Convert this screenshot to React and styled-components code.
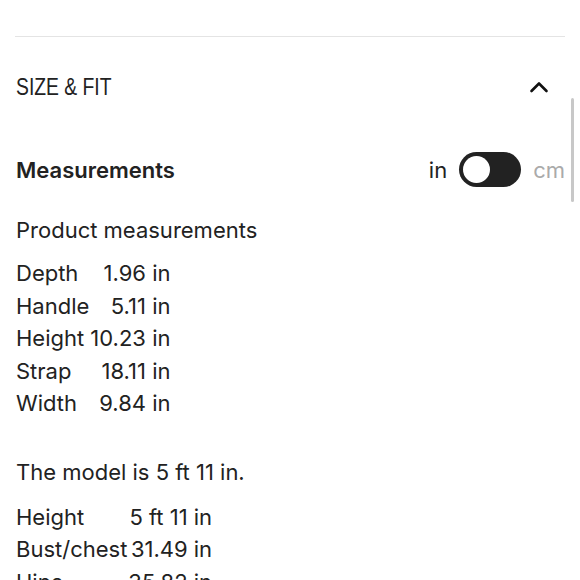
import React from "react";
import styled, { createGlobalStyle } from "styled-components";

const Global = createGlobalStyle`
  html, body { margin: 0; padding: 0; background: #fff; }
  body { font-family: Inter, "Noto Sans", sans-serif; color: #222; }
`;

const Page = styled.div`
  position: relative;
  width: 580px;
  height: 580px;
  overflow: hidden;
  padding: 36px 15px 0 16px;
  box-sizing: border-box;
`;

const Divider = styled.div`
  height: 1px;
  background: #e4e4e4;
  margin-left: -1px;
`;

const Header = styled.div`
  height: 100px;
  display: flex;
  align-items: center;
  justify-content: space-between;
`;

const Title = styled.h2`
  margin: 0;
  font-family: "Liberation Sans", Arial, sans-serif;
  font-weight: 400;
  font-size: 23px;
  color: #222;
  transform: scaleX(0.84);
  transform-origin: left center;
`;

const Chevron = styled.svg`
  width: 20px;
  height: 12px;
  margin-right: 16px;
`;

const MeasureRow = styled.div`
  margin-top: 15px;
  height: 35px;
  display: flex;
  align-items: center;
  justify-content: space-between;
`;

const Heading = styled.h3`
  margin: 0;
  font-size: 22px;
  font-weight: 600;
  color: #222;
`;

const Units = styled.div`
  display: flex;
  align-items: center;
  gap: 12px;
  font-size: 22px;
`;

const Unit = styled.span`
  color: ${(p) => (p.$active ? "#222" : "#aaa")};
`;

const Switch = styled.div`
  width: 62px;
  height: 35px;
  border-radius: 18px;
  background: #222;
  display: flex;
  align-items: center;
  padding: 0 4px;
  box-sizing: border-box;
`;

const Knob = styled.div`
  width: 27px;
  height: 27px;
  border-radius: 50%;
  background: #fff;
`;

const Para = styled.p`
  margin: ${(p) => p.$mt}px 0 0;
  font-size: 22px;
  line-height: 32px;
`;

const Table = styled.table`
  margin-top: ${(p) => p.$mt}px;
  border-collapse: collapse;
  font-size: 22px;
  line-height: 32.5px;
  td { padding: 0; white-space: nowrap; }
  td:first-child { padding-right: 1px; }
  td:last-child { text-align: right; }
`;

const Scrollbar = styled.div`
  position: absolute;
  left: 571px;
  top: 98px;
  width: 3px;
  height: 104px;
  border-radius: 2px;
  background: #c8c8c8;
`;

const product = [
  ["Depth", "1.96 in"],
  ["Handle", "5.11 in"],
  ["Height", "10.23 in"],
  ["Strap", "18.11 in"],
  ["Width", "9.84 in"],
];

const model = [
  ["Height", "5 ft 11 in"],
  ["Bust/chest", "31.49 in"],
  ["Hips", "35.82 in"],
];

export default function App() {
  return (
    <>
      <Global />
      <Page>
        <Divider />
        <Header>
          <Title>SIZE &amp; FIT</Title>
          <Chevron viewBox="0 0 20 12">
            <path d="M2.5 10 L10 2.5 L17.5 10" fill="none" stroke="#111" strokeWidth="2.6" strokeLinecap="round" strokeLinejoin="round" />
          </Chevron>
        </Header>
        <MeasureRow>
          <Heading>Measurements</Heading>
          <Units>
            <Unit $active>in</Unit>
            <Switch><Knob /></Switch>
            <Unit>cm</Unit>
          </Units>
        </MeasureRow>
        <Para $mt={27}>Product measurements</Para>
        <Table $mt={11}>
          <tbody>
            {product.map(([k, v]) => (
              <tr key={k}><td>{k}</td><td>{v}</td></tr>
            ))}
          </tbody>
        </Table>
        <Para $mt={36}>The model is 5 ft 11 in.</Para>
        <Table $mt={13}>
          <tbody>
            {model.map(([k, v]) => (
              <tr key={k}><td>{k}</td><td>{v}</td></tr>
            ))}
          </tbody>
        </Table>
        <Scrollbar />
      </Page>
    </>
  );
}
